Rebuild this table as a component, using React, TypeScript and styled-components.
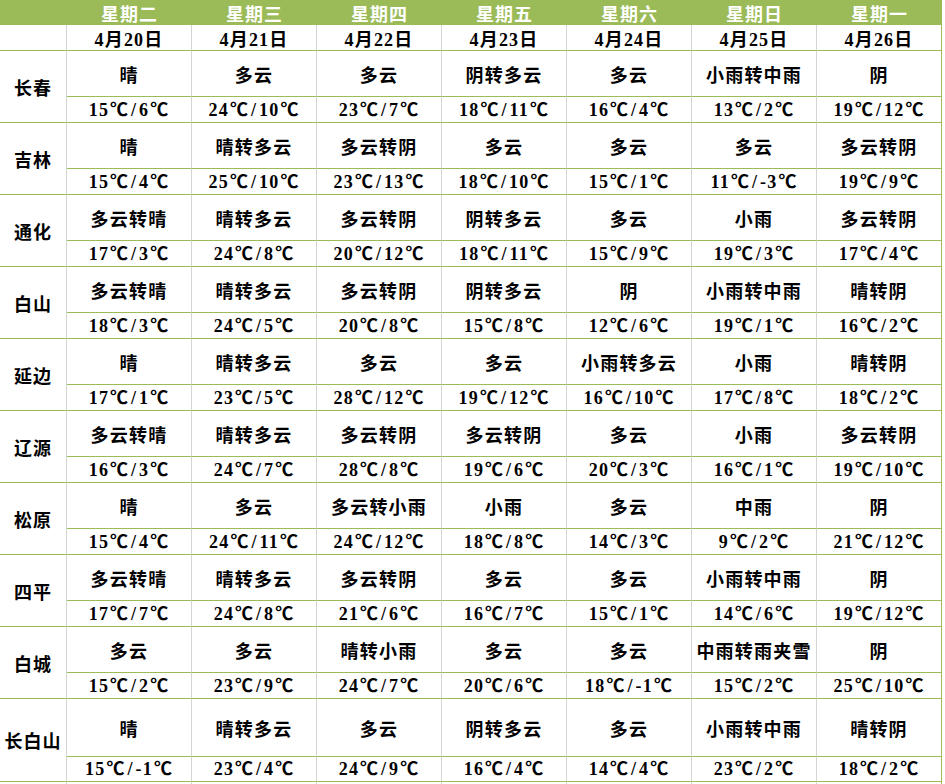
import { createGlobalStyle, styled } from 'styled-components'

type CityRow = {
  city: string
  weather: string[]
  temps: string[]
}

const GREEN = '#9bbb59'
const GREY = '#d4d4d4'

const days = ['星期二', '星期三', '星期四', '星期五', '星期六', '星期日', '星期一']
const dates = ['4月20日', '4月21日', '4月22日', '4月23日', '4月24日', '4月25日', '4月26日']

const rows: CityRow[] = [
  {
    city: '长春',
    weather: ['晴', '多云', '多云', '阴转多云', '多云', '小雨转中雨', '阴'],
    temps: ['15℃/6℃', '24℃/10℃', '23℃/7℃', '18℃/11℃', '16℃/4℃', '13℃/2℃', '19℃/12℃'],
  },
  {
    city: '吉林',
    weather: ['晴', '晴转多云', '多云转阴', '多云', '多云', '多云', '多云转阴'],
    temps: ['15℃/4℃', '25℃/10℃', '23℃/13℃', '18℃/10℃', '15℃/1℃', '11℃/-3℃', '19℃/9℃'],
  },
  {
    city: '通化',
    weather: ['多云转晴', '晴转多云', '多云转阴', '阴转多云', '多云', '小雨', '多云转阴'],
    temps: ['17℃/3℃', '24℃/8℃', '20℃/12℃', '18℃/11℃', '15℃/9℃', '19℃/3℃', '17℃/4℃'],
  },
  {
    city: '白山',
    weather: ['多云转晴', '晴转多云', '多云转阴', '阴转多云', '阴', '小雨转中雨', '晴转阴'],
    temps: ['18℃/3℃', '24℃/5℃', '20℃/8℃', '15℃/8℃', '12℃/6℃', '19℃/1℃', '16℃/2℃'],
  },
  {
    city: '延边',
    weather: ['晴', '晴转多云', '多云', '多云', '小雨转多云', '小雨', '晴转阴'],
    temps: ['17℃/1℃', '23℃/5℃', '28℃/12℃', '19℃/12℃', '16℃/10℃', '17℃/8℃', '18℃/2℃'],
  },
  {
    city: '辽源',
    weather: ['多云转晴', '晴转多云', '多云转阴', '多云转阴', '多云', '小雨', '多云转阴'],
    temps: ['16℃/3℃', '24℃/7℃', '28℃/8℃', '19℃/6℃', '20℃/3℃', '16℃/1℃', '19℃/10℃'],
  },
  {
    city: '松原',
    weather: ['晴', '多云', '多云转小雨', '小雨', '多云', '中雨', '阴'],
    temps: ['15℃/4℃', '24℃/11℃', '24℃/12℃', '18℃/8℃', '14℃/3℃', '9℃/2℃', '21℃/12℃'],
  },
  {
    city: '四平',
    weather: ['多云转晴', '晴转多云', '多云转阴', '多云', '多云', '小雨转中雨', '阴'],
    temps: ['17℃/7℃', '24℃/8℃', '21℃/6℃', '16℃/7℃', '15℃/1℃', '14℃/6℃', '19℃/12℃'],
  },
  {
    city: '白城',
    weather: ['多云', '多云', '晴转小雨', '多云', '多云', '中雨转雨夹雪', '阴'],
    temps: ['15℃/2℃', '23℃/9℃', '24℃/7℃', '20℃/6℃', '18℃/-1℃', '15℃/2℃', '25℃/10℃'],
  },
  {
    city: '长白山',
    weather: ['晴', '晴转多云', '多云', '阴转多云', '多云', '小雨转中雨', '晴转阴'],
    temps: ['15℃/-1℃', '23℃/4℃', '24℃/9℃', '16℃/4℃', '14℃/4℃', '23℃/2℃', '18℃/2℃'],
  },
]

const GlobalStyle = createGlobalStyle`
  html, body {
    margin: 0;
    padding: 0;
    background: #ffffff;
  }
  body {
    font-family: "Liberation Serif", "Noto Sans CJK SC", serif;
    color: #000000;
  }
`

// the source sheet uses full-width ℃ and a half-width slash, so give both fixed boxes
const renderTemp = (t: string) => {
  const [high, low] = t.split('/')
  return (
    <StyledTemp>
      {high.replace('℃', '')}
      <StyledUnit>℃</StyledUnit>
      <StyledSlash>/</StyledSlash>
      {low.replace('℃', '')}
      <StyledUnit>℃</StyledUnit>
    </StyledTemp>
  )
}

const App = () => {
  return (
    <>
      <GlobalStyle />
      <StyledTable>
        <StyledHeaderRow>
          <StyledHeaderCell />
          {days.map((d) => (
            <StyledHeaderCell key={d}>{d}</StyledHeaderCell>
          ))}
        </StyledHeaderRow>
        <StyledRow>
          <StyledCell />
          {dates.map((d, i) => (
            <StyledCell key={d} $last={i === dates.length - 1}>
              {d}
            </StyledCell>
          ))}
        </StyledRow>
        {rows.map((row, idx) => {
          const isLast = idx === rows.length - 1
          return (
            <StyledBlock key={row.city} $top={isLast ? 58 : 46} $bottom={isLast ? 25 : 26}>
              <StyledCityCell>{row.city}</StyledCityCell>
              {row.weather.map((w, i) => (
                <StyledCell key={`w${i}`} $last={i === 6}>
                  {w}
                </StyledCell>
              ))}
              {row.temps.map((t, i) => (
                <StyledCell key={`t${i}`} $last={i === 6}>
                  {renderTemp(t)}
                </StyledCell>
              ))}
            </StyledBlock>
          )
        })}
        <StyledTail>
          <StyledTailCell />
          {days.map((d, i) => (
            <StyledTailCell key={d} $last={i === 6} />
          ))}
        </StyledTail>
      </StyledTable>
    </>
  )
}

const StyledTable = styled.div`
  width: 942px;
  display: flex;
  flex-direction: column;
`

const StyledHeaderRow = styled.div`
  display: grid;
  grid-template-columns: 67px repeat(7, 125px);
  height: 25px;
  background: ${GREEN};
`

const StyledHeaderCell = styled.div`
  display: flex;
  align-items: center;
  justify-content: center;
  color: #ffffff;
  font-size: 18px;
  font-weight: bold;
  letter-spacing: 1px;
`

const StyledRow = styled.div`
  display: grid;
  grid-template-columns: 67px repeat(7, 125px);
  grid-template-rows: 26px;
`

const StyledBlock = styled.div<{ $top: number; $bottom: number }>`
  display: grid;
  grid-template-columns: 67px repeat(7, 125px);
  grid-template-rows: ${({ $top, $bottom }) => `${$top}px ${$bottom}px`};
`

const StyledCell = styled.div<{ $last?: boolean }>`
  box-sizing: border-box;
  display: flex;
  align-items: center;
  justify-content: center;
  border-right: 1px solid ${({ $last }) => ($last ? GREEN : GREY)};
  border-bottom: 1px solid ${GREEN};
  font-size: 18px;
  font-weight: bold;
  letter-spacing: 1.2px;
  white-space: nowrap;
`

const StyledTemp = styled.span`
  white-space: nowrap;
  line-height: 1;
`

const StyledUnit = styled.span`
  display: inline-block;
  width: 18px;
  text-align: center;
  letter-spacing: 0;
  margin: 0 1px;
`

const StyledSlash = styled.span`
  display: inline-block;
  width: 9px;
  text-align: center;
  letter-spacing: 0;
  margin-right: 1px;
`

const StyledCityCell = styled.div`
  box-sizing: border-box;
  grid-row: 1 / span 2;
  display: flex;
  align-items: center;
  justify-content: center;
  border-right: 1px solid ${GREY};
  border-bottom: 1px solid ${GREEN};
  font-size: 18px;
  font-weight: bold;
  letter-spacing: 1px;
  white-space: nowrap;
`

const StyledTail = styled.div`
  display: grid;
  grid-template-columns: 67px repeat(7, 125px);
  height: 12px;
`

const StyledTailCell = styled.div<{ $last?: boolean }>`
  box-sizing: border-box;
  border-right: 1px solid ${({ $last }) => ($last ? GREEN : GREY)};
`

export default App
